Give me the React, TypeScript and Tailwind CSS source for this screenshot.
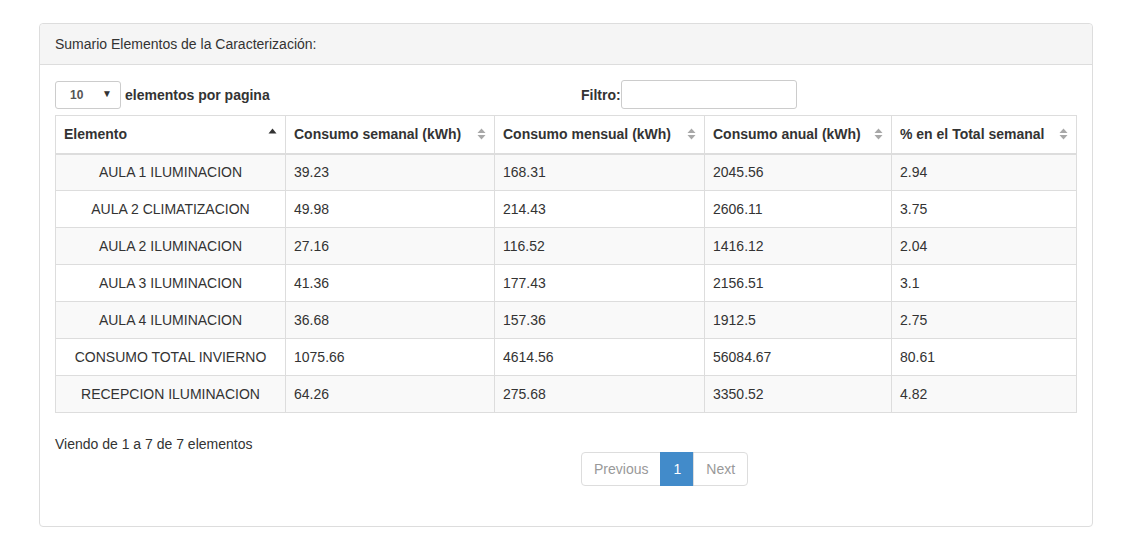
import React from "react";

const rows = [
  ["AULA 1 ILUMINACION", "39.23", "168.31", "2045.56", "2.94"],
  ["AULA 2 CLIMATIZACION", "49.98", "214.43", "2606.11", "3.75"],
  ["AULA 2 ILUMINACION", "27.16", "116.52", "1416.12", "2.04"],
  ["AULA 3 ILUMINACION", "41.36", "177.43", "2156.51", "3.1"],
  ["AULA 4 ILUMINACION", "36.68", "157.36", "1912.5", "2.75"],
  ["CONSUMO TOTAL INVIERNO", "1075.66", "4614.56", "56084.67", "80.61"],
  ["RECEPCION ILUMINACION", "64.26", "275.68", "3350.52", "4.82"],
];

const headers = [
  { t: "Elemento", w: "w-[230px]" },
  { t: "Consumo semanal (kWh)", w: "w-[209px]" },
  { t: "Consumo mensual (kWh)", w: "w-[210px]" },
  { t: "Consumo anual (kWh)", w: "w-[187px]" },
  { t: "% en el Total semanal", w: "" },
];

function SortBoth() {
  return (
    <svg width="9" height="12" viewBox="0 0 9 12" className="shrink-0">
      <path d="M4.5 0.5 L8.5 5 H0.5 Z" fill="#a8a8a8" />
      <path d="M4.5 11.5 L8.5 7 H0.5 Z" fill="#a8a8a8" />
    </svg>
  );
}

function SortAsc() {
  return (
    <svg width="9" height="6" viewBox="0 0 9 6" className="shrink-0 -mt-[6px]">
      <path d="M4.5 0.5 L8.5 5.5 H0.5 Z" fill="#333333" />
    </svg>
  );
}

export default function App() {
  return (
    <div
      className="bg-white text-[14px] leading-[20px] text-[#333333] pt-[23px] px-[39px] pb-[29px]"
      style={{ fontFamily: '"Liberation Sans", Arial, Helvetica, sans-serif' }}
    >
      <div className="w-[1054px] border border-[#dddddd] rounded-[4px] bg-white">
        <div className="bg-[#f5f5f5] border-b border-[#dddddd] rounded-t-[4px] px-[15px] py-[10px]">
          Sumario Elementos de la Caracterización:
        </div>
        <div className="px-[15px] pt-[15px] pb-[40px]">
          <div className="grid grid-cols-2 gap-[30px] mb-[6px]">
            <div className="flex items-center">
              <div className="relative w-[66px] h-[28px] border border-[#cccccc] rounded-[3px] bg-white flex items-center pl-[14px] text-[12px] font-bold text-[#555555]">
                10
                <span className="absolute right-[8px] top-[5px] text-[10px] leading-[14px] text-[#333]">▼</span>
              </div>
              <span className="ml-[4px] font-bold">elementos por pagina</span>
            </div>
            <div className="flex items-center">
              <span className="font-bold">Filtro:</span>
              <div className="w-[176px] h-[29px] border border-[#cccccc] rounded-[3px] bg-white" />
            </div>
          </div>
          <table className="w-full table-fixed border-collapse border border-[#dddddd]">
            <thead>
              <tr>
                {headers.map((h, i) => (
                  <th
                    key={i}
                    className={`${h.w} h-[38px] border border-[#dddddd] border-b-2 px-[8px] text-left font-bold align-middle`}
                  >
                    <div className="flex items-center justify-between">
                      <span>{h.t}</span>
                      {i === 0 ? <SortAsc /> : <SortBoth />}
                    </div>
                  </th>
                ))}
              </tr>
            </thead>
            <tbody>
              {rows.map((r, ri) => (
                <tr key={ri} className={ri % 2 === 0 ? "bg-[#f9f9f9]" : "bg-white"}>
                  {r.map((c, ci) => (
                    <td
                      key={ci}
                      className={`h-[37px] border border-[#dddddd] px-[8px] align-middle ${
                        ci === 0 ? "text-center" : "text-left"
                      }`}
                    >
                      {c}
                    </td>
                  ))}
                </tr>
              ))}
            </tbody>
          </table>
          <div className="grid grid-cols-2 gap-[30px] mt-[21px]">
            <div>Viendo de 1 a 7 de 7 elementos</div>
            <div className="pt-[18px]">
              <div className="flex h-[34px]">
                <span className="flex items-center px-[12px] border border-[#dddddd] rounded-l-[4px] text-[#999999] bg-white">
                  Previous
                </span>
                <span className="flex items-center px-[12px] border border-[#428bca] bg-[#428bca] text-white -ml-px">
                  1
                </span>
                <span className="flex items-center px-[12px] border border-[#dddddd] rounded-r-[4px] text-[#999999] bg-white -ml-px">
                  Next
                </span>
              </div>
            </div>
          </div>
        </div>
      </div>
    </div>
  );
}
